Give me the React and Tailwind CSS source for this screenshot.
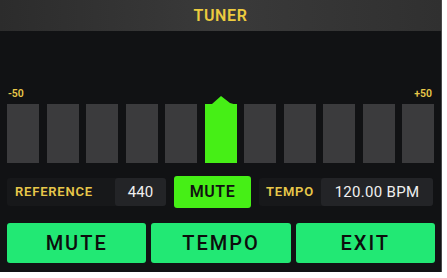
import React from 'react';

const FONT = { fontFamily: 'Roboto, "Noto Sans", "Liberation Sans", sans-serif' };

// 11 segments, index 5 is the lit (in tune) one
const SEGMENTS = Array.from({ length: 11 }, (_, i) => i);

const TunerBar = ({ active }) => {
  if (!active) {
    return <div className="w-8 h-[59px] bg-[#3b3b3d]" />;
  }
  return (
    <div className="relative w-8 h-[59px] bg-[#46ef16]">
      {/* the little roof on top of the lit segment */}
      <svg className="absolute left-0 -top-[8px]" width="32" height="9" viewBox="0 0 32 9">
        <polygon points="0,9 7,8 16,0 25,7 32,9" fill="#46ef16" />
      </svg>
    </div>
  );
};

export default function App() {
  return (
    <div className="w-[447px] h-[278px] bg-white" style={FONT}>
      <div className="w-[442px] h-[272px] bg-[#111214] flex flex-col border-r border-[#4a4a4a]">
        {/* Header */}
        <div className="h-[31px] bg-gradient-to-r from-[#2c2c2c] via-[#3a3a3a] to-[#303030] flex items-center justify-center">
          <span className="text-[16px] font-semibold text-[#eccb3f] tracking-[0.6px]">TUNER</span>
        </div>

        {/* Scale labels */}
        <div className="mt-[57px] h-[12px] px-[8px] flex justify-between items-center text-[10.5px] font-semibold text-[#e8c84a] leading-none">
          <span>-50</span>
          <span className="mr-[1px]">+50</span>
        </div>

        {/* Segments */}
        <div className="mt-[4px] pl-[7px] pr-[7px] flex justify-between">
          {SEGMENTS.map((i) => (
            <TunerBar key={i} active={i === 5} />
          ))}
        </div>

        {/* Reference / mute / tempo row */}
        <div className="mt-[13px] h-[32px] pl-[7px] pr-[8px] flex items-center">
          <div className="flex items-center h-[28px] bg-[#17181a] rounded-[3px]">
            <span className="w-[108px] pl-[8px] text-[13px] font-semibold tracking-[0.8px] text-[#e8c84a]">REFERENCE</span>
            <div className="w-[51px] h-[28px] bg-[#232427] rounded-[3px] flex items-center justify-center text-[15px] text-[#f0f0f0]">
              440
            </div>
          </div>
          <button className="ml-[8px] w-[77px] h-[32px] bg-[#46ef16] rounded-[3px] text-[16px] font-semibold text-[#111] tracking-[0.5px]">
            MUTE
          </button>
          <div className="ml-[8px] flex-1 flex items-center h-[28px] bg-[#17181a] rounded-[3px]">
            <span className="w-[62px] pl-[7px] text-[13px] font-semibold tracking-[0.8px] text-[#e8c84a]">TEMPO</span>
            <div className="flex-1 h-[28px] bg-[#232427] rounded-[3px] flex items-center justify-center text-[15px] tracking-[0.3px] text-[#f0f0f0]">
              120.00 BPM
            </div>
          </div>
        </div>

        {/* Bottom buttons */}
        <div className="mt-[15px] pl-[7px] pr-[6px] grid grid-cols-3 gap-[5px]">
          {['MUTE', 'TEMPO', 'EXIT'].map((label) => (
            <button
              key={label}
              className="h-[40px] bg-[#22e874] rounded-[3px] text-[20px] font-medium tracking-[2px] text-[#0d0d0d]"
            >
              {label}
            </button>
          ))}
        </div>
      </div>
    </div>
  );
}
